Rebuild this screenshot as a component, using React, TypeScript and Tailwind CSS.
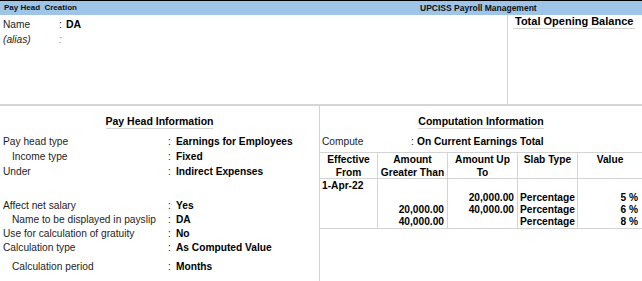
import React from "react";

const Row = ({
  label,
  value,
  indent = false,
  cls = "",
  colonX = 165,
}: {
  label: string;
  value: string;
  indent?: boolean;
  cls?: string;
  colonX?: number;
}) => (
  <div className={`flex items-center whitespace-nowrap ${cls}`}>
    <div
      className={indent ? "pl-[12px]" : "pl-[3px]"}
      style={{ width: colonX + 3 }}
    >
      {label}
    </div>
    <div className="w-[8px]">:</div>
    <div className="font-bold text-black">{value}</div>
  </div>
);

export default function App() {
  const line = "border-[#d4d4d4]";
  return (
    <div
      className="w-[642px] h-[281px] bg-white text-[10.2px] text-[#1e1e1e] overflow-hidden flex flex-col"
      style={{ fontFamily: "'Liberation Sans', Arial, sans-serif" }}
    >
      {/* Title bar */}
      <div className="h-[15px] border-t border-black bg-[#9ec4e8] flex items-center text-[8px] font-bold text-[#111] leading-[14px]">
        <span className="pl-[4px] w-[420px] whitespace-pre">Pay Head  Creation</span>
        <span className="text-[8.5px]">UPCISS Payroll Management</span>
      </div>

      {/* Top section */}
      <div className="h-[89px] flex">
        <div className="flex-1 pt-[2px]">
          <div className="flex h-[15px] items-center">
            <div className="pl-[3px] w-[59px]">Name</div>
            <div className="w-[7px]">:</div>
            <div className="font-bold text-[10.5px] text-black">DA</div>
          </div>
          <div className="flex h-[15px] items-center">
            <div className="pl-[3px] w-[59px] italic">(alias)</div>
            <div className="w-[7px] italic text-[#888]">:</div>
          </div>
        </div>
        <div className={`w-[135px] border-l ${line}`}>
          <div className={`ml-[5px] mr-[7px] h-[14px] leading-[13px] border-b ${line} pl-[2px] text-[11px] font-bold text-black`}>
            Total Opening Balance
          </div>
        </div>
      </div>

      <div className="h-[2px] bg-[#d6d6d6]" />

      {/* Bottom section */}
      <div className="flex-1 flex">
        {/* Left panel */}
        <div className={`w-[320px] border-r ${line}`}>
          <div className="mt-[9px] flex justify-center">
            <span className={`h-[14px] leading-[13px] border-b ${line} text-[10.5px] font-bold text-black`}>
              Pay Head Information
            </span>
          </div>
          <div className="mt-[5px] leading-[15px]">
            <Row label="Pay head type" value="Earnings for Employees" />
            <Row label="Income type" value="Fixed" indent />
            <Row label="Under" value="Indirect Expenses" />
          </div>
          <div className="mt-[20px] leading-[14px]">
            <Row label="Affect net salary" value="Yes" />
            <Row label="Name to be displayed in payslip" value="DA" indent />
            <Row label="Use for calculation of gratuity" value="No" />
            <Row label="Calculation type" value="As Computed Value" />
            <Row label="Calculation period" value="Months" indent cls="mt-[5px]" />
          </div>
        </div>

        {/* Right panel */}
        <div className="flex-1">
          <div className="mt-[9px] flex justify-center">
            <span className={`h-[14px] leading-[13px] border-b ${line} text-[10.5px] font-bold text-black`}>
              Computation Information
            </span>
          </div>
          <div className="mt-[5px] flex items-center leading-[15px] whitespace-nowrap">
            <div className="pl-[2px] w-[91px]">Compute</div>
            <div className="w-[6px]">:</div>
            <div className="font-bold text-black">On Current Earnings Total</div>
          </div>
          <div
            className={`mt-[3px] grid grid-cols-[58px_70px_70px_60px_64px] border-t border-b ${line} font-bold text-black`}
          >
            {/* header */}
            <div className={`h-[26px] border-r border-b ${line} text-center leading-[13px]`}>
              Effective<br />From
            </div>
            <div className={`h-[26px] border-r border-b ${line} text-center leading-[13px]`}>
              Amount<br />Greater Than
            </div>
            <div className={`h-[26px] border-r border-b ${line} text-center leading-[13px]`}>
              Amount Up<br />To
            </div>
            <div className={`h-[26px] border-r border-b ${line} text-center leading-[13px]`}>
              Slab Type
            </div>
            <div className={`h-[26px] border-b ${line} text-center leading-[13px]`}>
              Value
            </div>
            {/* body */}
            <div className={`border-r ${line} pl-[2px] leading-[12px] pt-[1px]`}>
              <div className="h-[12px]">1-Apr-22</div>
              <div className="h-[12px]" />
              <div className="h-[12px]" />
              <div className="h-[12px]" />
            </div>
            <div className={`border-r ${line} pr-[3px] text-right leading-[12px] pt-[1px]`}>
              <div className="h-[12px]" />
              <div className="h-[12px]" />
              <div className="h-[12px]">20,000.00</div>
              <div className="h-[12px]">40,000.00</div>
            </div>
            <div className={`border-r ${line} pr-[3px] text-right leading-[12px] pt-[1px]`}>
              <div className="h-[12px]" />
              <div className="h-[12px]">20,000.00</div>
              <div className="h-[12px]">40,000.00</div>
              <div className="h-[12px]" />
            </div>
            <div className={`border-r ${line} pl-[2px] leading-[12px] pt-[1px]`}>
              <div className="h-[12px]" />
              <div className="h-[12px]">Percentage</div>
              <div className="h-[12px]">Percentage</div>
              <div className="h-[12px]">Percentage</div>
            </div>
            <div className="pr-[4px] text-right leading-[12px] pt-[1px]">
              <div className="h-[12px]" />
              <div className="h-[12px]">5 %</div>
              <div className="h-[12px]">6 %</div>
              <div className="h-[12px]">8 %</div>
            </div>
          </div>
        </div>
      </div>
    </div>
  );
}
